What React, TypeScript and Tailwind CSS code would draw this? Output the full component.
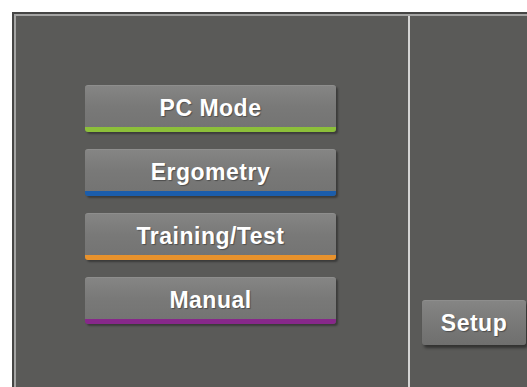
import React from "react";

const modes = [
  { label: "PC Mode", bar: "border-[#8cbf3a]" },
  { label: "Ergometry", bar: "border-[#1b5dab]" },
  { label: "Training/Test", bar: "border-[#e8922c]" },
  { label: "Manual", bar: "border-[#87288a]" },
];

const ModeButton = ({ label, bar }: { label: string; bar: string }) => {
  return (
    <div
      className={`h-[47px] w-[251px] rounded-[3px] border-b-[5px] ${bar}
        bg-gradient-to-b from-[#858584] via-[#797978] to-[#747473]
        shadow-[2px_2px_2px_rgba(0,0,0,0.35)] border-t border-t-[#8e8e8d]
        flex items-center justify-center pt-[4px]`}
    >
      <span className="text-[23px] leading-none font-bold tracking-[0.5px] text-white [text-shadow:1px_1px_1px_rgba(0,0,0,0.35)]">
        {label}
      </span>
    </div>
  );
};

export default function App() {
  return (
    <div
      className="w-[527px] h-[387px] overflow-hidden bg-white pt-3 pl-3"
      style={{ fontFamily: '"Liberation Sans", Arial, sans-serif' }}
    >
      <div className="h-[400px] w-[540px] border-t-2 border-l-2 border-[#454544]">
        <div className="h-full flex border-t-2 border-l-2 border-[#a4a4a3] bg-[#5a5a58]">
          <div className="w-[392px] pt-[69px] pl-[69px] flex flex-col gap-[17px]">
            {modes.map((m) => (
              <ModeButton key={m.label} label={m.label} bar={m.bar} />
            ))}
          </div>
          <div className="w-[2px] bg-[#d4d4d3]" />
          <div className="pl-3 pt-[284px]">
            <div
              className="h-[45px] w-[104px] rounded-[3px] border-t border-t-[#8e8e8d]
                bg-gradient-to-b from-[#858584] via-[#797978] to-[#6f6f6e]
                shadow-[2px_3px_3px_rgba(0,0,0,0.45)] flex items-center justify-center"
            >
              <span className="text-[23px] leading-none font-bold tracking-[0.5px] text-white [text-shadow:1px_1px_1px_rgba(0,0,0,0.35)]">
                Setup
              </span>
            </div>
          </div>
        </div>
      </div>
    </div>
  );
}
